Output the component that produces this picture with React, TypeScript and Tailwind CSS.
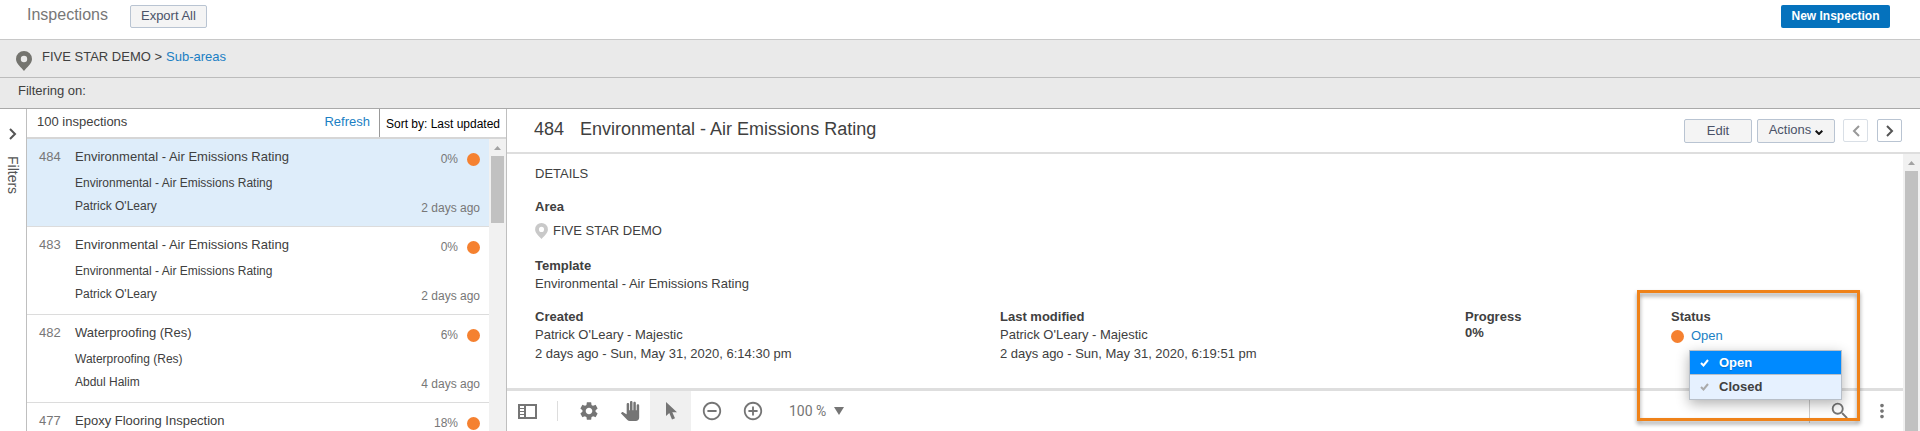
import { MdAddCircleOutline, MdMoreVert, MdPanTool, MdRemoveCircleOutline, MdSearch, MdSettings } from "react-icons/md";

const inspections = [
  { id: 484, title: "Environmental - Air Emissions Rating", owner: "Patrick O'Leary", progress: "0%", updated: "2 days ago" },
  { id: 483, title: "Environmental - Air Emissions Rating", owner: "Patrick O'Leary", progress: "0%", updated: "2 days ago" },
  { id: 482, title: "Waterproofing (Res)", owner: "Abdul Halim", progress: "6%", updated: "4 days ago" },
  { id: 477, title: "Epoxy Flooring Inspection", progress: "18%" },
];

function Pin({ className }: { className: string }) {
  return (
    <svg viewBox="0 0 16 20" className={className} fill="currentColor" fillRule="evenodd" aria-hidden="true">
      <path d="M8 0a8 8 0 0 0-8 8c0 5 5.500 8.500 8 12 2.500-3.500 8-7 8-12a8 8 0 0 0-8-8zm0 4.800a3.200 3.200 0 1 1 0 6.400 3.200 3.200 0 0 1 0-6.400z" />
    </svg>
  );
}

function Chevron({ left = false }: { left?: boolean }) {
  return (
    <svg viewBox="0 0 8 12" className="h-3 w-2" fill="none" stroke="currentColor" strokeWidth="2" aria-hidden="true">
      <path d={left ? "M7 1L2 6l5 5" : "M1 1l5 5-5 5"} />
    </svg>
  );
}

function Check() {
  return (
    <svg viewBox="0 0 9 8" className="h-2 w-[9px]" fill="none" stroke="currentColor" strokeWidth="2" aria-hidden="true">
      <path d="M1 4l2.500 2.500L8 1" />
    </svg>
  );
}

function Scrollbar({ thumb }: { thumb: string }) {
  return (
    <div className="flex w-[17px] shrink-0 flex-col items-center bg-[#f1f1f1]">
      <svg viewBox="0 0 17 17" className="h-[17px] w-[17px] shrink-0" fill="#a3a3a3" aria-hidden="true">
        <path d="M5 11l3.500-4 3.500 4z" />
      </svg>
      <div className={`w-[13px] bg-[#c1c1c1] ${thumb}`} />
    </div>
  );
}

export default function App() {
  return (
    <div className="flex h-screen flex-col overflow-hidden bg-white font-['Liberation_Sans',Arial,sans-serif] text-[13px] leading-4 text-[#404040]">
      <header className="flex h-10 shrink-0 items-start border-b border-[#c8c8c8] pt-[5px] pr-[30px] pl-[27px]">
        <h1 className="text-base leading-5 text-[#777]">Inspections</h1>
        <button className="ml-[22px] h-[23px] w-[77px] rounded-xs border border-[#b9c4d2] bg-[#f4f4f4] pb-px text-[#4a5268]">Export All</button>
        <button className="ml-auto h-[23px] w-[109px] rounded-xs bg-[#0572bd] pb-px text-xs font-bold text-white">New Inspection</button>
      </header>

      <nav className="flex h-[38px] shrink-0 items-center border-b border-[#bcbcbc] bg-[#eaeaea] pl-4">
        <Pin className="mt-1 h-5 w-4 text-[#74746f]" />
        <span className="ml-[10px] pb-1">FIVE STAR DEMO &gt;</span>
        <a href="#" className="ml-1 pb-1 text-[#1b7fc4]">Sub-areas</a>
      </nav>
      <div className="flex h-[31px] shrink-0 items-start border-b border-[#a9a9a9] bg-[#eaeaea] pt-[5px] pl-[18px]">Filtering on:</div>

      <div className="flex min-h-0 flex-1">
        <button className="flex w-[26px] shrink-0 flex-col items-center pt-[19px] text-[#555]">
          <Chevron />
          <span className="mt-4 text-sm [writing-mode:vertical-rl]">Filters</span>
        </button>

        <section className="flex w-[481px] shrink-0 flex-col border-x border-[#bfbfbf]">
          <div className="flex h-[30px] shrink-0 border-b-2 border-[#d6d6d6]">
            <span className="flex-1 pt-[5px] pl-[10px]">100 inspections</span>
            <a href="#" className="pt-[5px] pr-[9px] text-[#1b7fc4]">Refresh</a>
            <button className="w-[127px] border-l border-[#999] pt-0.5 text-xs whitespace-nowrap text-black">Sort by: Last updated</button>
          </div>
          <div className="flex min-h-0 flex-1">
            <ul className="min-w-0 flex-1 overflow-hidden">
              {inspections.map((item, i) => (
                <li
                  key={item.id}
                  className={`flex h-22 justify-between border-b border-[#dcdcdc] pt-[10px] pr-[9px] pl-3 ${i === 0 ? "bg-[#deedfa]" : ""}`}
                >
                  <span className="w-9 text-[#777]">{item.id}</span>
                  <div className="flex-1 text-xs leading-4">
                    <p className="text-[13px]">{item.title}</p>
                    {item.owner && (
                      <>
                        <p className="mt-[10px]">{item.title}</p>
                        <p className="mt-[7px]">{item.owner}</p>
                      </>
                    )}
                  </div>
                  <div className="flex flex-col items-end pt-0.5 text-xs leading-4 text-[#777]">
                    <span className="flex items-center gap-[9px]">
                      {item.progress}
                      <i className="size-[13px] rounded-full bg-[#f58130]" />
                    </span>
                    {item.updated && <span className="mt-[33px]">{item.updated}</span>}
                  </div>
                </li>
              ))}
            </ul>
            <Scrollbar thumb="h-[67px] shrink-0" />
          </div>
        </section>

        <main className="flex min-w-0 flex-1 flex-col">
          <div className="flex h-[45px] shrink-0 items-start border-b-2 border-[#dedede] pr-[18px] pl-[27px]">
            <h2 className="pt-2 text-lg leading-6">
              <span className="mr-4">484</span>Environmental - Air Emissions Rating
            </h2>
            <div className="ml-auto flex items-start pt-[10px] text-[#4a5268]">
              <button className="h-6 w-[68px] rounded-xs border border-[#b9c4d2] bg-[#f4f4f4]">Edit</button>
              <button className="ml-[5px] flex h-6 w-[78px] items-center justify-center gap-1 rounded-xs border border-[#b9c4d2] bg-[#f4f4f4] pb-0.5">
                Actions
                <svg viewBox="0 0 8 5" className="mt-1 h-[5px] w-2" fill="none" stroke="#111" strokeWidth="2" aria-hidden="true">
                  <path d="M.7.7L4 4 7.300.7" />
                </svg>
              </button>
              <button aria-label="Previous" className="ml-2 flex h-[23px] w-[25px] items-center justify-center rounded-xs border border-[#d9dfe6] text-[#999]">
                <Chevron left />
              </button>
              <button aria-label="Next" className="ml-[9px] flex h-[23px] w-[25px] items-center justify-center rounded-xs border border-[#b9c4d2] text-[#555]">
                <Chevron />
              </button>
            </div>
          </div>

          <div className="flex min-h-0 flex-1">
            <div className="flex min-w-0 flex-1 flex-col">
              <div className="min-h-0 flex-1 pt-3 pl-7">
                <h3>DETAILS</h3>
                <h4 className="mt-[17px] font-bold">Area</h4>
                <p className="mt-2 flex items-center gap-[5px]">
                  <Pin className="h-4 w-[13px] text-[#c9c9c9]" />
                  FIVE STAR DEMO
                </p>
                <h4 className="mt-[19px] font-bold">Template</h4>
                <p className="mt-0.5">Environmental - Air Emissions Rating</p>
                <div className="mt-[17px] grid grid-cols-[465fr_465fr_206fr_232fr]">
                  <div>
                    <h4 className="font-bold">Created</h4>
                    <p className="mt-0.5">Patrick O'Leary - Majestic</p>
                    <p className="mt-[3px]">2 days ago - Sun, May 31, 2020, 6:14:30 pm</p>
                  </div>
                  <div>
                    <h4 className="font-bold">Last modified</h4>
                    <p className="mt-0.5">Patrick O'Leary - Majestic</p>
                    <p className="mt-[3px]">2 days ago - Sun, May 31, 2020, 6:19:51 pm</p>
                  </div>
                  <div className="font-bold">
                    <h4>Progress</h4>
                    <p>0%</p>
                  </div>
                  <div className="relative">
                    <h4 className="font-bold">Status</h4>
                    <a href="#" className="mt-[3px] flex items-center gap-[7px] text-[#1b7fc4]">
                      <i className="size-[13px] rounded-full bg-[#f58130]" />
                      Open
                    </a>
                    <div role="menu" className="absolute top-[41px] left-[18px] z-10 w-[153px] border border-[#b8bfc8] font-bold shadow-[0_4px_12px_rgba(0,0,0,0.3)]">
                      <button role="menuitem" className="flex h-6 w-full items-center gap-[10px] border-b border-[#b8bfc8] bg-[#008aff] pl-[10px] text-white text-shadow-xs">
                        <Check />
                        Open
                      </button>
                      <button role="menuitem" className="flex h-6 w-full items-center gap-[10px] bg-[#e6f1ff] pl-[10px]">
                        <span className="text-[#aaa]"><Check /></span>
                        Closed
                      </button>
                    </div>
                    <div className="pointer-events-none absolute -top-[19px] -left-[34px] z-20 h-[131px] w-[223px] border-3 border-[#ef8219] drop-shadow-[0_3px_2px_rgba(0,0,0,0.4)]" />
                  </div>
                </div>
              </div>

              <div className="flex h-[43px] shrink-0 items-center border-t-3 border-[#dedede] pl-[11px] text-[#757575]">
                <button aria-label="Toggle panel">
                  <svg viewBox="0 0 19 15" className="h-[15px] w-[19px]" fill="none" stroke="currentColor" strokeWidth="2" aria-hidden="true">
                    <path d="M1 1h17v13H1zM7 1v13" />
                    <path d="M2 4.500h4M2 7.500h4M2 10.500h4" strokeWidth="1" />
                  </svg>
                </button>
                <div className="ml-5 h-5 w-px bg-[#ddd]" />
                <button aria-label="Settings" className="ml-[10px] flex h-10 w-[41px] items-center justify-center"><MdSettings size={22} /></button>
                <button aria-label="Pan" className="flex h-10 w-[41px] items-center justify-center"><MdPanTool size={20} /></button>
                <button aria-label="Select" className="flex h-10 w-[41px] items-center justify-center bg-[#f0f0f0]">
                  <svg viewBox="0 0 12 18" className="h-[18px] w-3" fill="currentColor" aria-hidden="true">
                    <path d="M1 0v14l3.300-3 2.700 6.500 3-1.300-2.700-6H12z" />
                  </svg>
                </button>
                <button aria-label="Zoom out" className="flex h-10 w-[41px] items-center justify-center"><MdRemoveCircleOutline size={22} /></button>
                <button aria-label="Zoom in" className="flex h-10 w-[41px] items-center justify-center"><MdAddCircleOutline size={22} /></button>
                <button className="ml-4 flex items-center gap-2 font-[Roboto,sans-serif] text-sm">
                  100 %
                  <svg viewBox="0 0 10 8" className="h-2 w-[10px]" fill="currentColor" aria-hidden="true"><path d="M0 0h10L5 8z" /></svg>
                </button>
                <div className="ml-auto h-6 w-px bg-[#ccc]" />
                <button aria-label="Search" className="ml-[19px]"><MdSearch size={22} /></button>
                <button aria-label="More" className="mr-[10px] ml-5"><MdMoreVert size={22} /></button>
              </div>
            </div>
            <Scrollbar thumb="flex-1" />
          </div>
        </main>
      </div>
    </div>
  );
}
